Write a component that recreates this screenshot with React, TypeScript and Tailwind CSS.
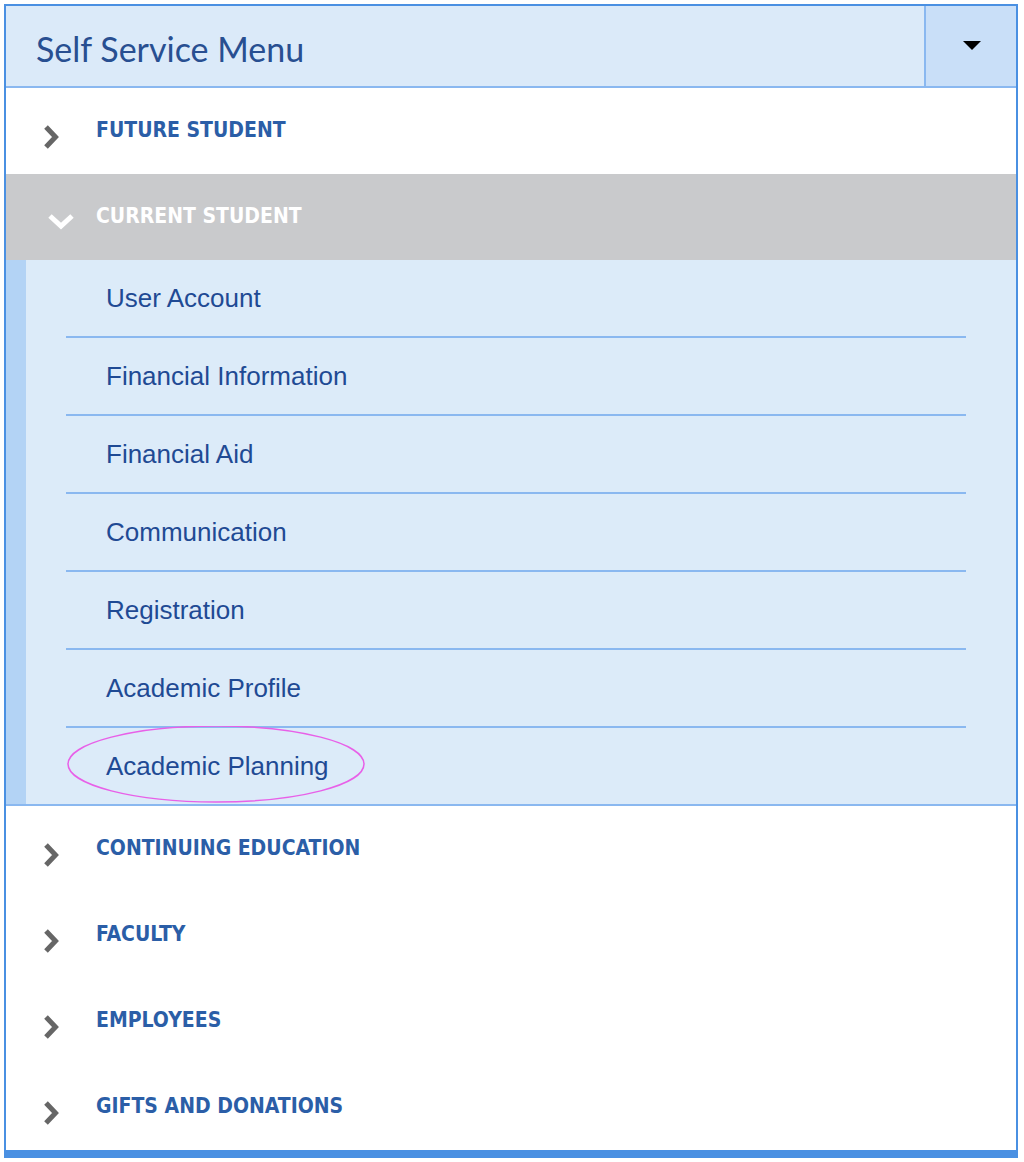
import React from 'react';

const headingFont = { fontFamily: '"Liberation Sans Narrow", "DejaVu Sans Condensed", "Liberation Sans", sans-serif' };

const ChevronRight: React.FC = () => (
  <svg width="20" height="26" viewBox="0 0 20 26" className="shrink-0 ml-[35px] mr-[35px] mt-[11px]">
    <path d="M5 3 L14.5 13 L5 23" fill="none" stroke="#666" strokeWidth="5" />
  </svg>
);

const ChevronDown: React.FC = () => (
  <svg width="28" height="20" viewBox="0 0 28 20" className="shrink-0 ml-[41px] mr-[21px] mt-[9px]">
    <path d="M3 4 L14 14 L25 4" fill="none" stroke="#fff" strokeWidth="5" />
  </svg>
);

const Section: React.FC<{ label: string; open?: boolean }> = ({ label, open }) => (
  <div className={`h-[86px] flex items-center ${open ? 'bg-[#c9cacc]' : 'bg-white'}`}>
    {open ? <ChevronDown /> : <ChevronRight />}
    <span
      style={headingFont}
      className={`text-[21px] font-bold ${open ? 'text-white' : 'text-[#2b5ea7]'}`}
    >
      {label}
    </span>
  </div>
);

const subItems = [
  'User Account',
  'Financial Information',
  'Financial Aid',
  'Communication',
  'Registration',
  'Academic Profile',
  'Academic Planning',
];

export default function App() {
  return (
    <div className="bg-white w-[1024px] h-[1162px] pt-[4px] pl-[4px]">
      <div className="w-[1014px] border-2 border-b-[8px] border-[#4a90e2]">
        {/* Header */}
        <div className="h-[82px] flex bg-[#dbeaf9] border-b-2 border-[#8ab8f0]">
          <div
            className="flex-1 flex items-center pl-[30px] pt-[4px] text-[34px] text-[#284f91]"
            style={{ fontFamily: 'Lato, "Open Sans", sans-serif' }}
          >
            Self Service Menu
          </div>
          <div className="w-[92px] border-l-2 border-[#8ab8f0] bg-[#c9dff8] flex items-center justify-center">
            <svg width="18" height="10" viewBox="0 0 18 10" className="ml-[2px]">
              <path d="M0 0 H18 L9 9 Z" fill="#000" />
            </svg>
          </div>
        </div>

        <Section label="FUTURE STUDENT" />
        <Section label="CURRENT STUDENT" open />

        {/* Sub menu */}
        <div className="flex bg-[#dcebf9] border-b-2 border-[#8ab8f0]">
          <div className="w-[20px] bg-[#b3d3f5]" />
          <div className="flex-1 pl-[40px] pr-[50px]">
            {subItems.map((item, i) => (
              <div
                key={item}
                className={`relative flex items-center pl-[40px] ${
                  i < subItems.length - 1 ? 'h-[78px] border-b-2 border-[#8ab8f0]' : 'h-[76px]'
                }`}
              >
                <span
                  className="text-[26px] text-[#1f4a94]"
                  style={{ fontFamily: '"Liberation Sans", Arial, sans-serif' }}
                >
                  {item}
                </span>
                {item === 'Academic Planning' && (
                  <svg
                    className="absolute left-[1px] top-[-2px] pointer-events-none"
                    width="300"
                    height="82"
                    viewBox="0 0 300 82"
                  >
                    <ellipse cx="149" cy="38" rx="148" ry="38" fill="none" stroke="#e860e8" strokeWidth="1.5" />
                  </svg>
                )}
              </div>
            ))}
          </div>
        </div>

        <Section label="CONTINUING EDUCATION" />
        <Section label="FACULTY" />
        <Section label="EMPLOYEES" />
        <Section label="GIFTS AND DONATIONS" />
      </div>
    </div>
  );
}
